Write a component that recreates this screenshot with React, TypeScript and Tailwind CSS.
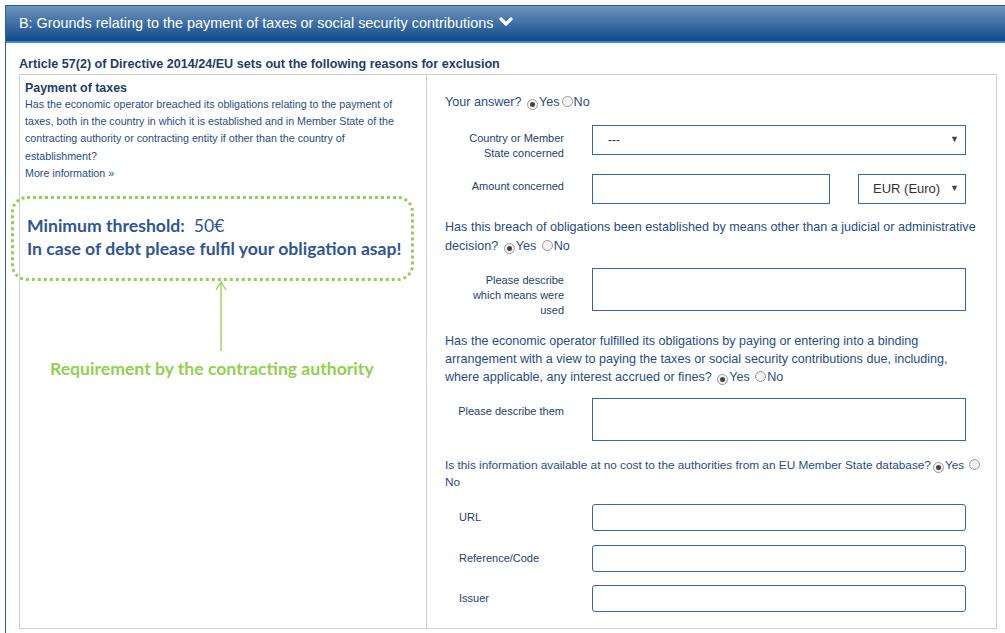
import React from 'react';

function Radio({ checked }: { checked?: boolean }) {
    return (
        <span className="inline-flex items-center justify-center w-[11px] h-[11px] rounded-full border border-[#9a9a9a] bg-[#f3f3f3] align-[-1px] ml-[2px] mr-[1px]">
            {checked && <span className="w-[5px] h-[5px] rounded-full bg-[#444]" />}
        </span>
    );
}

function YesNo({ space }: { space?: boolean }) {
    return (
        <span className="whitespace-nowrap">
            <Radio checked />Yes{space ? ' ' : ''}<Radio />No
        </span>
    );
}

function Label({ children, className = '' }: { children: React.ReactNode; className?: string }) {
    return <div className={`w-[120px] shrink-0 text-[11px] leading-[15px] text-[#1d3f6b] ${className}`}>{children}</div>;
}

const box = 'border border-[#3467a6] bg-white';

export default function App() {
    return (
        <div className="w-[1005px] h-[633px] overflow-hidden bg-white" style={{ fontFamily: '"Liberation Sans", Arial, sans-serif' }}>
            <div className="ml-[5px] mt-[5px] border-l border-[#2f5f96] h-[628px]">
                <div className="h-[38px] border-t border-[#2c5a8c] border-b-2 border-b-[#3c8ad6] bg-gradient-to-b from-[#6c94bd] to-[#0a4a8b] flex items-center pl-[13px] text-white text-[14.4px]">
                    <span>B: Grounds relating to the payment of taxes or social security contributions</span>
                    <svg width="14" height="12" viewBox="0 0 14 12" className="ml-[6px] mb-[3px]">
                        <polyline points="2,3 7,8 12,3" fill="none" stroke="white" strokeWidth="3.2" strokeLinecap="round" strokeLinejoin="round" />
                    </svg>
                </div>
                <div className="pl-[13px] pr-[8px]">
                    <div className="pt-[13px] text-[12.6px] font-bold text-[#1d3d68] leading-[16px]">
                        Article 57(2) of Directive 2014/24/EU sets out the following reasons for exclusion
                    </div>
                    <div className="mt-[2px] border border-[#cfcfcf] grid grid-cols-[407px_1fr] h-[555px]">
                        <div className="border-r border-[#cfcfcf] pl-[5px] pr-[6px] pt-[5px] text-[#1f4d86]">
                            <div className="text-[12.4px] font-bold leading-[16px] text-[#1d3d68]">Payment of taxes</div>
                            <div className="text-[10.7px] leading-[17.2px] pr-[18px]">
                                Has the economic operator breached its obligations relating to the payment of taxes, both in the country in which it is established and in Member State of the contracting authority or contracting entity if other than the country of establishment?
                            </div>
                            <div className="text-[10.7px] leading-[16px]">More information »</div>
                            <div
                                className="-ml-[14px] mt-[15px] w-[403px] h-[85px] rounded-[16px] border-[3px] border-dotted border-[#92d050] pl-[13px] pt-[15px] text-[#2f5597] text-[17.6px] leading-[23px]"
                                style={{ fontFamily: 'Lato, "Open Sans", sans-serif' }}
                            >
                                <div><span className="font-bold">Minimum threshold:</span>&nbsp; 50€</div>
                                <div className="font-bold">In case of debt please fulfil your obligation asap!</div>
                            </div>
                            <div className="ml-[190px]">
                                <svg width="12" height="72" viewBox="0 0 12 72">
                                    <line x1="6" y1="1" x2="6" y2="70" stroke="#92d050" strokeWidth="1.3" />
                                    <polyline points="1,9 6,1 11,9" fill="none" stroke="#92d050" strokeWidth="1.3" />
                                </svg>
                            </div>
                            <div
                                className="ml-[25px] mt-[5px] text-[17.6px] font-bold text-[#92d050] leading-[22px]"
                                style={{ fontFamily: 'Lato, "Open Sans", sans-serif' }}
                            >
                                Requirement by the contracting authority
                            </div>
                        </div>
                        <div className="pl-[18px] pr-[12px] pt-[18px] text-[12.6px] text-[#1f4d86]">
                            <div className="leading-[18px]">Your answer? <YesNo /></div>
                            <div className="flex mt-[14px] pr-[18px]">
                                <Label className="text-right pt-[6px] pr-[1px]">Country or Member<br />State concerned</Label>
                                <div className={`ml-[27px] flex-1 h-[30px] ${box} flex items-center pl-[15px] pr-[6px] text-[#333] text-[12px]`}>
                                    <span className="flex-1">---</span>
                                    <span className="text-[9px] text-[#444]">▼</span>
                                </div>
                            </div>
                            <div className="flex mt-[13px] pr-[18px]">
                                <Label className="text-right pt-[5px] pr-[1px]">Amount concerned</Label>
                                <div className={`ml-[27px] w-[238px] h-[30px] ${box}`} />
                                <div className={`ml-[28px] flex-1 h-[30px] ${box} flex items-center pl-[14px] pr-[6px] text-[#333] text-[13px]`}>
                                    <span className="flex-1">EUR (Euro)</span>
                                    <span className="text-[9px] text-[#444]">▼</span>
                                </div>
                            </div>
                            <div className="mt-[14px] leading-[19px]">
                                Has this breach of obligations been established by means other than a judicial or administrative decision? <YesNo space />
                            </div>
                            <div className="flex mt-[12px] pr-[18px]">
                                <Label className="text-right pt-[5px] pr-[1px]">Please describe<br />which means were<br />used</Label>
                                <div className={`ml-[27px] flex-1 h-[43px] ${box}`} />
                            </div>
                            <div className="mt-[14px] leading-[18px]">
                                Has the economic operator fulfilled its obligations by paying or entering into a binding arrangement with a view to paying the taxes or social security contributions due, including, where applicable, any interest accrued or fines? <YesNo space />
                            </div>
                            <div className="flex mt-[12px] pr-[18px]">
                                <Label className="text-right pt-[6px] pr-[1px]">Please describe them</Label>
                                <div className={`ml-[27px] flex-1 h-[43px] ${box}`} />
                            </div>
                            <div className="mt-[16px] leading-[17px] text-[11.8px]">
                                Is this information available at no cost to the authorities from an EU Member State database?<span className="whitespace-nowrap"><Radio checked />Yes</span> <Radio /><wbr />No
                            </div>
                            <div className="flex mt-[13px] pr-[18px]">
                                <Label className="pl-[14px] pt-[6px]">URL</Label>
                                <div className={`ml-[27px] flex-1 h-[27px] rounded-[3px] ${box}`} />
                            </div>
                            <div className="flex mt-[14px] pr-[18px]">
                                <Label className="pl-[14px] pt-[6px]">Reference/Code</Label>
                                <div className={`ml-[27px] flex-1 h-[27px] rounded-[3px] ${box}`} />
                            </div>
                            <div className="flex mt-[13px] pr-[18px]">
                                <Label className="pl-[14px] pt-[6px]">Issuer</Label>
                                <div className={`ml-[27px] flex-1 h-[27px] rounded-[3px] ${box}`} />
                            </div>
                        </div>
                    </div>
                    <div className="mt-[4px] border-t border-[#cfcfcf]" />
                </div>
            </div>
        </div>
    );
}
